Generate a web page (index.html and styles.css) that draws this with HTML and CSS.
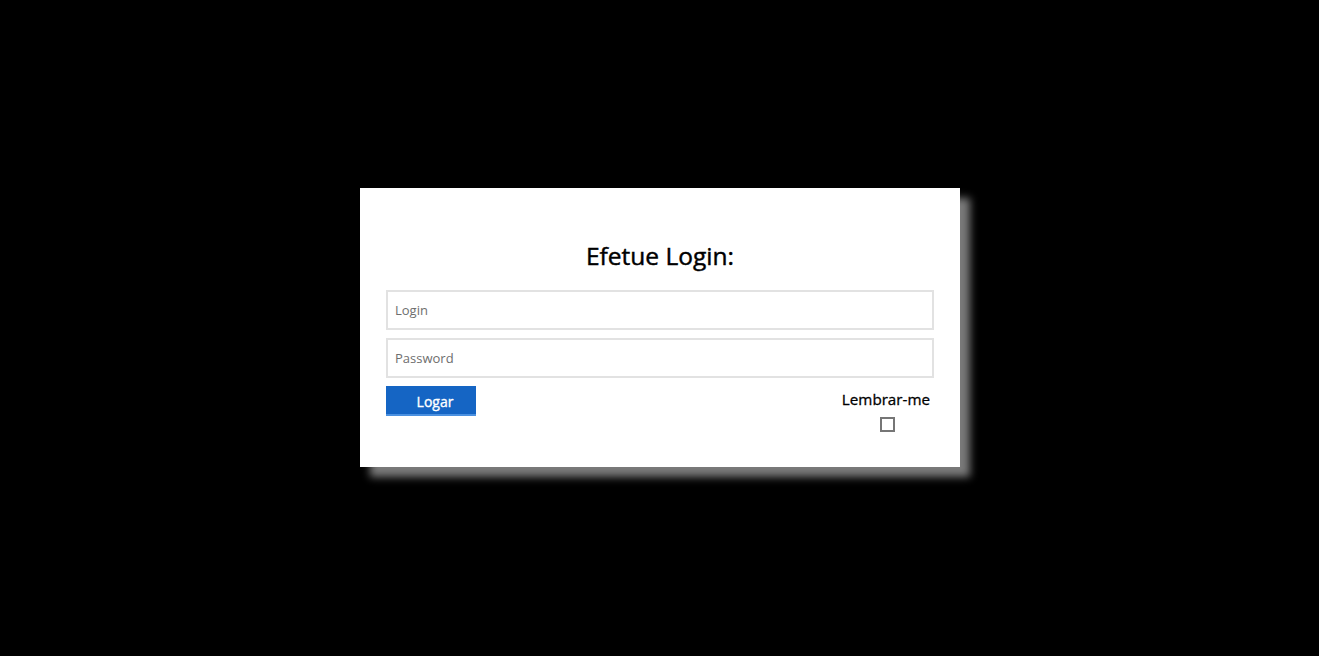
FILE: index.html
```html
<!DOCTYPE html>
<html lang="pt">
<head>
<meta charset="utf-8">
<title>Login</title>
<link rel="stylesheet" href="styles.css">
</head>
<body>
<main class="page">
  <form class="card">
    <h1 class="title">Efetue Login:</h1>
    <input class="field" type="text" placeholder="Login">
    <input class="field" type="password" placeholder="Password">
    <div class="actions">
      <button class="btn" type="button">Logar</button>
      <label class="remember">
        <span class="remember-text">Lembrar-me</span>
        <span class="box"></span>
      </label>
    </div>
  </form>
</main>
</body>
</html>
```
FILE: styles.css
```css
html, body {
  margin: 0;
  padding: 0;
  background: #000;
}
.page {
  height: 655px;
  display: flex;
  align-items: center;
  justify-content: center;
  font-family: "Open Sans", "Noto Sans", sans-serif;
}
.card {
  width: 600px;
  height: 279px;
  box-sizing: border-box;
  background: #fff;
  padding: 0 26px;
  box-shadow: 10px 10px 8px #7a7a7a;
  display: flex;
  flex-direction: column;
  margin-left: 1px;
}
.title {
  margin: 40px 0 0;
  font-size: 24.5px;
  font-weight: 400;
  -webkit-text-stroke: 0.45px #000;
  line-height: 56px;
  height: 62px;
  text-align: center;
  color: #000;
}
.field {
  display: block;
  box-sizing: border-box;
  width: 548px;
  height: 40px;
  margin: 0 0 8px;
  border: 2px solid #e2e2e2;
  padding: 0 7px;
  font-family: "Open Sans", sans-serif;
  font-size: 13px;
  color: #333;
  outline: none;
}
.field::placeholder {
  color: #6e6e6e;
}
.actions {
  display: flex;
  justify-content: space-between;
  align-items: flex-start;
}
.btn {
  width: 90px;
  height: 30px;
  background: #1565c4;
  color: #fff;
  border: 0;
  border-bottom: 2px solid #4a90e0;
  font-family: "Open Sans", sans-serif;
  font-size: 14px;
  font-weight: 400;
  -webkit-text-stroke: 0.35px #fff;
  padding: 2px 0 0 8px;
}
.remember {
  display: flex;
  flex-direction: column;
  align-items: center;
  margin-right: 4px;
}
.remember-text {
  font-size: 15.2px;
  font-weight: 400;
  -webkit-text-stroke: 0.3px #000;
  line-height: 26px;
  color: #000;
}
.box {
  box-sizing: content-box;
  width: 11px;
  height: 11px;
  border: 2px solid #767676;
  margin-top: 5px;
  margin-left: 4px;
}
```
